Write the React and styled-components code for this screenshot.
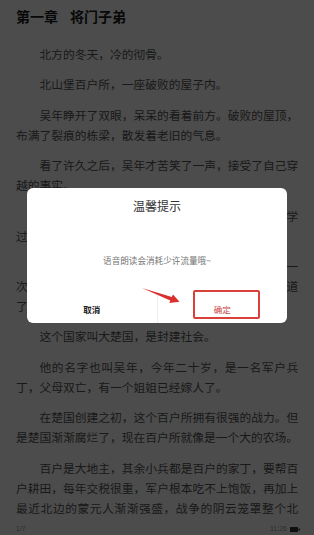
import React from "react";
import styled, { createGlobalStyle } from "styled-components";

const GlobalStyle = createGlobalStyle`
  html, body {
    margin: 0;
    padding: 0;
    overflow: hidden;
  }
  body {
    font-family: "Noto Sans CJK SC", "Noto Sans", sans-serif;
  }
`;

// Reader page
const Page = styled.div`
  height: 100vh;
  display: flex;
  flex-direction: column;
  background: #fff;
  color: #555;
`;

const Article = styled.article`
  flex: 0 0 519px;
  overflow: hidden;
  box-sizing: border-box;
  padding: 6px 15.75px 0 16px;
`;

const ChapterTitle = styled.h1`
  display: flex;
  gap: 12px;
  margin: 0 0 18px;
  font-size: 14px;
  line-height: 20px;
  font-weight: 700;
  color: #1c1c1c;
`;

// $continues: paragraph runs on to the next page, so its last line is justified too
const Paragraph = styled.p`
  margin: 0 0 10.4px;
  font-size: 11.75px;
  line-height: 20px;
  text-indent: 2em;
  text-align: justify;
  text-align-last: ${(p) => (p.$continues ? "justify" : "auto")};
`;

const Footer = styled.footer`
  flex: 1;
  display: flex;
  justify-content: space-between;
  align-items: flex-start;
  padding: 5px 14px 0 16px;
  font-family: "Liberation Sans", Arial, sans-serif;
  font-size: 7px;
  line-height: 10px;
  color: #999;
`;

const Status = styled.div`
  display: flex;
  align-items: center;
  gap: 3px;
`;

// Dialog
const Overlay = styled.div`
  position: fixed;
  inset: 0;
  background: rgba(0, 0, 0, 0.7);
  display: flex;
  justify-content: center;
  align-items: flex-start;
  padding-top: 188px;
`;

const Dialog = styled.div`
  position: relative;
  width: 260px;
  background: #fff;
  border-radius: 6px;
  display: flex;
  flex-direction: column;
  text-align: center;
`;

const DialogTitle = styled.div`
  padding-top: 10px;
  font-size: 12px;
  line-height: 16px;
  color: #333;
`;

const DialogMessage = styled.div`
  margin: 39px 0 28px;
  font-size: 8.6px;
  line-height: 14px;
  color: #777;
`;

const ButtonRow = styled.div`
  display: flex;
  height: 28px;
`;

const DialogButton = styled.button`
  flex: 1;
  border: none;
  background: none;
  padding: 0;
  font-family: inherit;
  font-size: 8.5px;
  font-weight: ${(p) => (p.$primary ? 400 : 700)};
  color: ${(p) => (p.$primary ? "#c9443f" : "#222")};

  & + & {
    border-left: 1px solid #eee;
  }
`;

// red annotation marks drawn over the dialog
const Highlight = styled.div`
  position: absolute;
  left: 166px;
  top: 102px;
  width: 67px;
  height: 29px;
  box-sizing: border-box;
  border: 2px solid #d9403a;
  border-radius: 2px;
  pointer-events: none;
`;

const ArrowMark = styled.svg`
  position: absolute;
  left: 112px;
  top: 96px;
  pointer-events: none;
`;

const paragraphs = [
  "北方的冬天，冷的彻骨。",
  "北山堡百户所，一座破败的屋子内。",
  "吴年睁开了双眼，呆呆的看着前方。破败的屋顶，布满了裂痕的栋梁，散发着老旧的气息。",
  "看了许久之后，吴年才苦笑了一声，接受了自己穿越的事实。",
  "前世的他只是个普通人，平日里喜欢读历史，也学过几年武艺，倒也不算手无缚鸡之力。",
  "融合了原主的记忆之后，吴年很快就弄明白了这一次穿越并非回到了古代，而是一个陌生的世界。他知道了这个世界的一些情况。",
  "这个国家叫大楚国，是封建社会。",
  "他的名字也叫吴年，今年二十岁，是一名军户兵丁，父母双亡，有一个姐姐已经嫁人了。",
  "在楚国创建之初，这个百户所拥有很强的战力。但是楚国渐渐腐烂了，现在百户所就像是一个大的农场。",
  "百户是大地主，其余小兵都是百户的家丁，要帮百户耕田，每年交税很重，军户根本吃不上饱饭，再加上最近北边的蒙元人渐渐强盛，战争的阴云笼罩整个北",
];

const BatteryIcon = () => (
  <svg width="10" height="5" viewBox="0 0 10 5">
    <rect x="0" y="0" width="8" height="5" rx="0.5" fill="#333" />
    <rect x="8.5" y="1.5" width="1.5" height="2" fill="#333" />
  </svg>
);

const App = () => {
  return (
    <>
      <GlobalStyle />
      <Page>
        <Article>
          <ChapterTitle>
            <span>第一章</span>
            <span>将门子弟</span>
          </ChapterTitle>
          {paragraphs.map((text, i) => (
            <Paragraph key={i} $continues={i === paragraphs.length - 1}>
              {text}
            </Paragraph>
          ))}
        </Article>
        <Footer>
          <span>1/7</span>
          <Status>
            <span>11:26</span>
            <BatteryIcon />
          </Status>
        </Footer>
      </Page>

      <Overlay>
        <Dialog>
          <DialogTitle>温馨提示</DialogTitle>
          <DialogMessage>语音朗读会消耗少许流量哦~</DialogMessage>
          <ButtonRow>
            <DialogButton>取消</DialogButton>
            <DialogButton $primary>确定</DialogButton>
          </ButtonRow>
          <ArrowMark width="45" height="22" viewBox="0 0 45 22">
            <polygon
              points="3,4 31.3,16.6 30.4,19 40.5,17.8 34,10.6 32.8,12.9"
              fill="#d9302c"
            />
          </ArrowMark>
          <Highlight />
        </Dialog>
      </Overlay>
    </>
  );
};

export default App;
